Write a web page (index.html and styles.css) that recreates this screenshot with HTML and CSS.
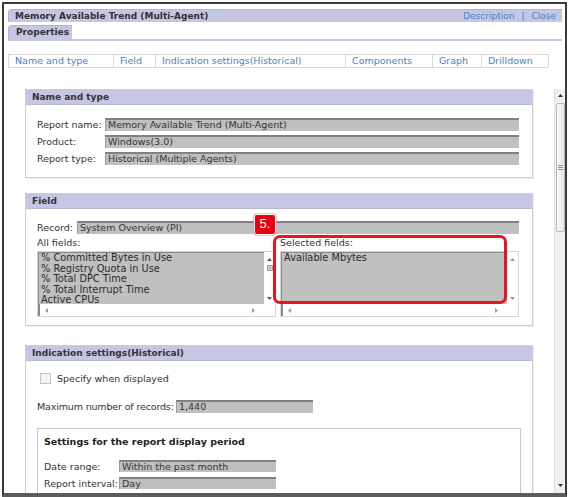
FILE: index.html
```html
<!DOCTYPE html>
<html>
<head>
<meta charset="utf-8">
<link rel="stylesheet" href="styles.css">
</head>
<body>
<div class="frame">
  <div class="titlebar">
    <span class="title">Memory Available Trend (Multi-Agent)</span>
    <span class="links"><span class="link">Description</span><span class="sep">|</span><span class="link">Close</span></span>
  </div>
  <div class="tabs"><div class="tab">Properties</div></div>
  <div class="nav">
    <div class="nav-item n1">Name and type</div>
    <div class="nav-item n2">Field</div>
    <div class="nav-item n3">Indication settings(Historical)</div>
    <div class="nav-item n4">Components</div>
    <div class="nav-item n5">Graph</div>
    <div class="nav-item n6">Drilldown</div>
  </div>
  <div class="content">
    <div class="main">
      <section class="panel">
        <div class="panel-head">Name and type</div>
        <div class="panel-body p1">
          <div class="row"><span class="lbl w68">Report name:</span><span class="input grow">Memory Available Trend (Multi-Agent)</span></div>
          <div class="row"><span class="lbl w68">Product:</span><span class="input grow">Windows(3.0)</span></div>
          <div class="row"><span class="lbl w68">Report type:</span><span class="input grow">Historical (Multiple Agents)</span></div>
        </div>
      </section>

      <section class="panel gap15">
        <div class="panel-head">Field</div>
        <div class="panel-body p2">
          <div class="row"><span class="lbl w40">Record:</span><span class="input grow">System Overview (PI)</span></div>
          <div class="cols">
            <div class="col">
              <div class="col-lbl">All fields:</div>
              <div class="list">
                <div class="items">
                  <div>% Committed Bytes in Use</div>
                  <div>% Registry Quota in Use</div>
                  <div>% Total DPC Time</div>
                  <div>% Total Interrupt Time</div>
                  <div>Active CPUs</div>
                </div>
                <div class="lv">
                  <svg class="up" width="5" height="3" viewBox="0 0 5 3"><path d="M0 3 L2.5 0 L5 3 Z" fill="#555"/></svg>
                  <svg class="grip" width="6" height="6" viewBox="0 0 6 6"><path d="M0.5 0.5 H5.5 V5.5 H0.5 Z" fill="#f4f4f4" stroke="#999"/><path d="M1.5 2 H4.5 M1.5 3 H4.5 M1.5 4 H4.5" stroke="#777" stroke-width="0.6"/></svg>
                  <svg class="dn" width="5" height="3" viewBox="0 0 5 3"><path d="M0 0 L2.5 3 L5 0 Z" fill="#555"/></svg>
                </div>
                <div class="lh">
                  <svg width="3" height="5" viewBox="0 0 3 5"><path d="M3 0 L0 2.5 L3 5 Z" fill="#999"/></svg>
                  <svg width="3" height="5" viewBox="0 0 3 5"><path d="M0 0 L3 2.5 L0 5 Z" fill="#999"/></svg>
                </div>
                <div class="corner"></div>
              </div>
            </div>
            <div class="col">
              <div class="col-lbl">Selected fields:</div>
              <div class="list">
                <div class="items">
                  <div>Available Mbytes</div>
                </div>
                <div class="lv">
                  <svg class="up" width="5" height="3" viewBox="0 0 5 3"><path d="M0 3 L2.5 0 L5 3 Z" fill="#999"/></svg>
                  <svg class="dn" width="5" height="3" viewBox="0 0 5 3"><path d="M0 0 L2.5 3 L5 0 Z" fill="#999"/></svg>
                </div>
                <div class="lh">
                  <svg width="3" height="5" viewBox="0 0 3 5"><path d="M3 0 L0 2.5 L3 5 Z" fill="#999"/></svg>
                  <svg width="3" height="5" viewBox="0 0 3 5"><path d="M0 0 L3 2.5 L0 5 Z" fill="#999"/></svg>
                </div>
                <div class="corner"></div>
              </div>
            </div>
            <div class="highlight"></div>
          </div>
          <div class="badge">5.</div>
        </div>
      </section>

      <section class="panel gap19">
        <div class="panel-head">Indication settings(Historical)</div>
        <div class="panel-body p3">
          <div class="check-row"><span class="checkbox"></span><span>Specify when displayed</span></div>
          <div class="row mt16"><span class="lbl w139">Maximum number of records:</span><span class="input w137">1,440</span></div>
          <div class="subbox">
            <div class="sub-title">Settings for the report display period</div>
            <div class="row short mt12"><span class="lbl w75">Date range:</span><span class="input w157">Within the past month</span></div>
            <div class="row short mt5"><span class="lbl w75">Report interval:</span><span class="input w157">Day</span></div>
          </div>
        </div>
      </section>
    </div>
    <div class="vscroll">
      <svg class="sb-up" width="5" height="3" viewBox="0 0 5 3"><path d="M0 3 L2.5 0 L5 3 Z" fill="#333"/></svg>
      <div class="thumb">
        <svg width="5" height="5" viewBox="0 0 5 5"><path d="M0 0.5 H5 M0 2.5 H5 M0 4.5 H5" stroke="#777" stroke-width="0.8"/></svg>
      </div>
      <div class="sb-fill"></div>
      <svg class="sb-dn" width="5" height="3" viewBox="0 0 5 3"><path d="M0 0 L2.5 3 L5 0 Z" fill="#333"/></svg>
    </div>
  </div>
</div>
</body>
</html>
```

FILE: styles.css
```css
* { box-sizing: border-box; }
html, body { margin: 0; padding: 0; background: #fff; }
body {
  width: 571px;
  height: 497px;
  overflow: hidden;
  font-family: "DejaVu Sans", Verdana, sans-serif;
  font-size: 9.5px;
  color: #333;
}
.frame {
  margin: 2px 0 0 2px;
  width: 565px;
  height: 495px;
  border: 2px solid #3a3a3a;
  border-bottom: 4px solid #5c5c5c;
  padding: 5px 3px 0 4px;
  display: flex;
  flex-direction: column;
  overflow: hidden;
}
.titlebar {
  height: 13px;
  background: #c5c5e4;
  border-top-left-radius: 4px;
  border-top: 1px solid #b4b4cf;
  border-left: 1px solid #b4b4cf;
  display: flex;
  align-items: center;
  justify-content: space-between;
  padding: 0 6px 0 6px;
}
.title { font-weight: bold; font-size: 9px; color: #333; }
.links { display: flex; align-items: center; color: #4a82c6; font-size: 9px; }
.link { color: #4a82c6; }
.sep { margin: 0 7px 0 7px; color: #4a82c6; }
.tabs {
  margin-top: 3px;
  border-bottom: 2px solid #c5c5e4;
  display: flex;
}
.tab {
  width: 64px;
  height: 14px;
  background: #c5c5e4;
  border-top-left-radius: 4px;
  border-top: 1px solid #b4b4cf;
  border-left: 1px solid #b4b4cf;
  font-weight: bold;
  font-size: 9px;
  line-height: 13px;
  padding-left: 7px;
  color: #333;
}
.nav {
  margin-top: 13px;
  width: 541px;
  height: 14px;
  border: 1px solid #d9d9d9;
  display: flex;
}
.nav-item {
  line-height: 12px;
  color: #4a82c6;
  padding-left: 6px;
  border-left: 1px solid #d9d9d9;
  white-space: nowrap;
}
.nav-item.n1 { border-left: none; width: 104px; }
.n2 { width: 42px; }
.n3 { width: 190px; }
.n4 { width: 87px; }
.n5 { width: 49px; }
.n6 { flex: 1; }
.content {
  margin-top: 12px;
  margin-right: -3px;
  flex: 1;
  display: flex;
  overflow: hidden;
}
.main {
  flex: 1;
  padding: 9px 21px 0 17px;
  overflow: hidden;
}
.panel {
  width: 508px;
  border: 1px solid #cdcdcd;
  box-shadow: 1px 1px 0 #ececec;
}
.gap15 { margin-top: 15px; }
.gap19 { margin-top: 19px; }
.panel-head {
  height: 15px;
  background: #c5c5e4;
  border-bottom: 1px solid #b8b8d8;
  font-weight: bold;
  font-size: 9px;
  line-height: 15px;
  padding-left: 6px;
  color: #333;
}
.panel-body { position: relative; }
.p1 { padding: 13px 13px 12px 11px; display: flex; flex-direction: column; gap: 4px; }
.p2 { padding: 12px 13px 8px 11px; }
.p3 { padding: 12px 11px 0 11px; height: 140px; }
.row { display: flex; align-items: center; height: 13px; }
.row.short { height: 12px; }
.lbl { white-space: nowrap; color: #333; flex-shrink: 0; }
.w68 { width: 68px; }
.w40 { width: 40px; }
.w139 { width: 139px; letter-spacing: -0.15px; }
.w75 { width: 75px; }
.input {
  height: 100%;
  background: #c0c0c0;
  border-top: 2px solid #808080;
  border-left: 1px solid #9a9a9a;
  padding-left: 2px;
  line-height: 10px;
  color: #333;
  white-space: nowrap;
  overflow: hidden;
}
.grow { flex: 1; }
.w137 { width: 137px; }
.w157 { width: 157px; }
.mt16 { margin-top: 16px; }
.mt12 { margin-top: 12px; }
.mt5 { margin-top: 5px; }
.cols {
  position: relative;
  margin-top: 3px;
  display: flex;
  gap: 4px;
}
.col { width: 239px; }
.col-lbl { height: 14px; line-height: 12px; color: #333; }
.list {
  height: 66px;
  border: 1px solid #d6d6d6;
  display: grid;
  grid-template-columns: 1fr 11px;
  grid-template-rows: 1fr 12px;
}
.items {
  background: #c0c0c0;
  border-top: 1px solid #888;
  border-left: 1px solid #888;
  padding: 0 0 0 2px;
  line-height: 10.5px;
  color: #2a2a2a;
  overflow: hidden;
  white-space: nowrap;
  font-size: 9.8px;
}
.lv {
  background: #fff;
  display: flex;
  flex-direction: column;
  align-items: center;
  padding: 6px 0 4px 0;
}
.lv .grip { margin-top: 4px; }
.lv .dn { margin-top: auto; }
.lh {
  background: #fff;
  display: flex;
  align-items: center;
  justify-content: space-between;
  padding: 0 9px 0 5px;
  border-left: 2px solid #888;
}
.corner { background: #fff; }
.highlight {
  position: absolute;
  left: 236px;
  top: -2px;
  width: 234px;
  height: 69px;
  border: 3px solid #e8141e;
  border-radius: 7px;
}
.badge {
  position: absolute;
  left: 228px;
  top: 5px;
  width: 22px;
  height: 21px;
  background: #e60012;
  border: 1.5px solid #fff;
  border-radius: 3px;
  box-shadow: 0 0 0 0.5px #e88;
  color: #fff;
  font-family: "Liberation Sans", Arial, sans-serif;
  font-size: 13px;
  line-height: 18px;
  text-align: center;
}
.check-row { display: flex; align-items: center; height: 11px; }
.checkbox {
  width: 11px;
  height: 11px;
  margin-left: 3px;
  margin-right: 6px;
  border: 1px solid #c4c4c4;
  background: #f3f3f3;
}
.subbox {
  margin-top: 15px;
  width: 484px;
  height: 80px;
  border: 1px solid #c8c8c8;
  padding: 6px 6px 0 6px;
}
.sub-title { font-weight: bold; font-size: 9.5px; line-height: 13px; color: #222; }
.vscroll {
  width: 11px;
  margin-top: 9px;
  background: #efefef;
  border-left: 1px solid #dcdcdc;
  display: flex;
  flex-direction: column;
  align-items: center;
  padding: 5px 0 6px 0;
}
.thumb {
  margin-top: 6px;
  width: 9px;
  height: 129px;
  border: 1px solid #b9b9b9;
  border-radius: 2px;
  background: linear-gradient(to right, #fafafa, #e4e4e4);
  display: flex;
  align-items: center;
  justify-content: center;
}
.sb-fill { flex: 1; }
```
